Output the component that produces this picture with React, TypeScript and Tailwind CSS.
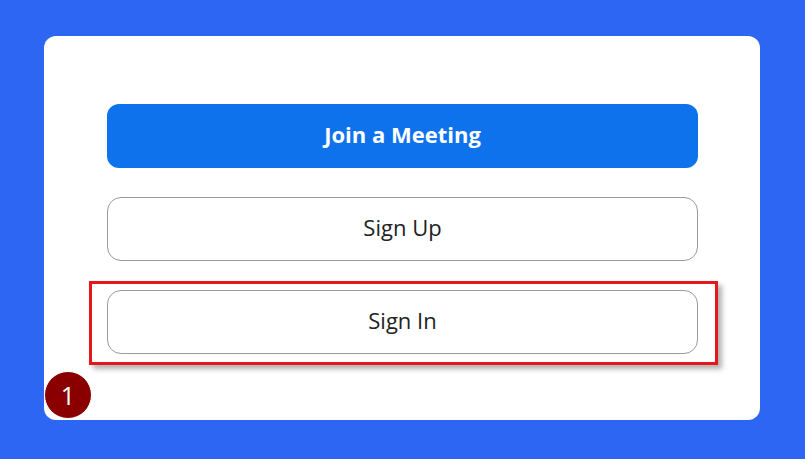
import React from 'react';

const font = { fontFamily: '"Open Sans", "Noto Sans", Arial, sans-serif' };

export default function App() {
  return (
    <div className="w-[805px] h-[459px] bg-[#2e66f4] pt-[36px] pl-[44px] overflow-hidden" style={font}>
      <div className="relative w-[716px] h-[384px] bg-white rounded-[12px] pt-[68px] pl-[63px]">
        <div className="flex flex-col gap-[29px] w-[591px]">
          <button className="h-[64px] pb-[3px] rounded-[12px] bg-[#0e72ed] text-white text-[22px] font-bold">
            Join a Meeting
          </button>
          <button className="h-[64px] pb-[3px] rounded-[14px] border border-[#9a9a9a] bg-white text-[#222] text-[22px]">
            Sign Up
          </button>
          <div className="relative">
            {/* highlight box */}
            <div className="absolute -top-[9px] -left-[18px] -right-[20px] -bottom-[11px] border-[3px] border-[#e4171b] shadow-[4px_4px_5px_rgba(0,0,0,0.3)]" />
            <button className="relative w-full h-[64px] pb-[3px] rounded-[14px] border border-[#9a9a9a] bg-white text-[#222] text-[22px]">
              Sign In
            </button>
          </div>
        </div>
        <div className="absolute left-0 top-[335px] w-[48px] h-[48px] rounded-full bg-[#8a0000] border border-white flex items-center justify-center text-white text-[25px] leading-none">
          1
        </div>
      </div>
    </div>
  );
}
